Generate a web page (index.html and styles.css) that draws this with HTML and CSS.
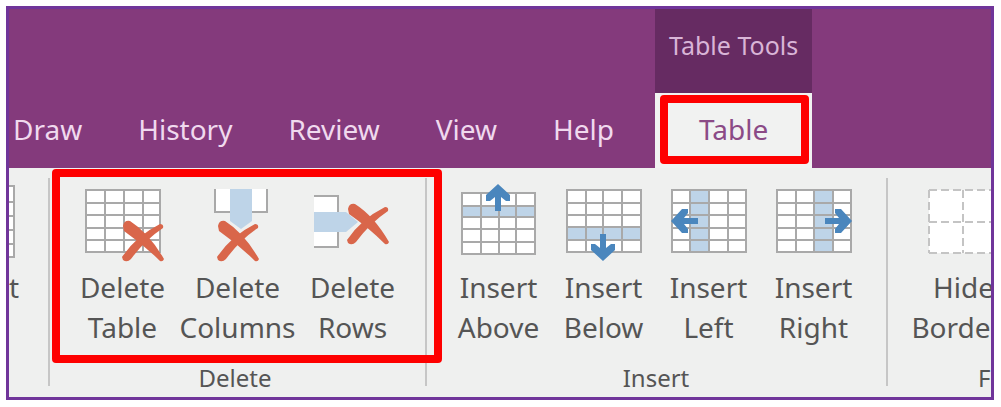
FILE: index.html
```html
<!DOCTYPE html>
<html lang="en">
<head>
<meta charset="utf-8">
<title>Table Tools ribbon</title>
<link rel="stylesheet" href="styles.css">
</head>
<body>
<svg class="defs" aria-hidden="true">
  <symbol id="cross" viewBox="0 0 42 43" overflow="visible">
    <path d="M1 6Q2 0 8 1Q27 13 42 39Q41 42 38 41Q22 25 2 11Z"/>
    <path d="M0 37Q14 16 38 4Q42 4 41 8Q23 20 9 39Q5 43 1 40Z"/>
  </symbol>
  <symbol id="arrow" viewBox="0 0 24 28" overflow="visible">
    <path d="M12 0L24 11V17H20L15 13V27H9V13L4 17H0V11Z"/>
  </symbol>
</svg>
<main class="frame">
  <header class="header">
    <nav class="tabs" role="tablist">
      <button class="tab" role="tab">Draw</button>
      <button class="tab" role="tab">History</button>
      <button class="tab" role="tab">Review</button>
      <button class="tab" role="tab">View</button>
      <button class="tab" role="tab">Help</button>
    </nav>
    <div class="context">
      <div class="context-title">Table Tools</div>
      <button class="tab tab-active" role="tab" aria-selected="true">Table<span class="mark mark-tab"></span></button>
    </div>
  </header>
  <div class="ribbon">
    <section class="group group-cut">
      <button class="tool">
        <svg class="icon-cut" viewBox="0 0 40 85"><path class="cell" d="M0 4H5V75H0z"/><path class="grid" d="M0 4H5V75H0M0 20H5M0 34H5M0 48H5M0 62H5"/></svg>
        <span>t</span>
      </button>
    </section>
    <span class="divider"></span>
    <section class="group group-delete">
      <div class="tools">
        <button class="tool">
          <svg class="icon" viewBox="0 0 88 85"><path class="cell" d="M7 8H81V70H7z"/><path class="grid" d="M7 8H81V70H7zM26 8V70M45 8V70M64 8V70M7 21H81M7 33H81M7 46H81M7 58H81"/><use class="cross" href="#cross" x="43" y="38" width="42" height="43"/></svg>
          <span>Delete<br>Table</span>
        </button>
        <button class="tool">
          <svg class="icon" viewBox="0 0 88 85"><path class="cell" d="M21 7H36V30H21zM58 7H73V30H58z"/><path class="grid" d="M21 7V30H36M58 30H73V7"/><path class="band" d="M36 7H58V39L47 47L36 39z"/><use class="cross" href="#cross" x="23" y="38" width="42" height="43"/></svg>
          <span>Delete<br>Columns</span>
        </button>
        <button class="tool">
          <svg class="icon" viewBox="0 0 88 85"><path class="cell" d="M5 14H29V30H5zM5 50H29V65H5z"/><path class="grid" d="M5 14H29V30M29 50V65H5"/><path class="band" d="M5 30H37L49 40L37 50H5z"/><use class="cross" href="#cross" x="38" y="21" width="42" height="43"/></svg>
          <span>Delete<br>Rows</span>
        </button>
      </div>
      <h2 class="group-label">Delete</h2>
      <span class="mark mark-group"></span>
    </section>
    <span class="divider"></span>
    <section class="group group-insert">
      <div class="tools">
        <button class="tool">
          <svg class="icon" viewBox="0 0 88 85"><path class="cell" d="M7 11H80V72H7z"/><path class="band" d="M7 24H80V35H7z"/><path class="grid" d="M7 11H80V72H7zM26 11V72M44 11V72M61 11V72M7 24H80M7 35H80M7 47H80M7 60H80"/><use class="arrow" href="#arrow" x="31" y="2" width="24" height="28"/></svg>
          <span>Insert<br>Above</span>
        </button>
        <button class="tool">
          <svg class="icon" viewBox="0 0 88 85"><path class="cell" d="M7 8H81V70H7z"/><path class="band" d="M7 45H81V58H7z"/><path class="grid" d="M7 8H81V70H7zM26 8V70M43 8V70M62 8V70M7 21H81M7 33H81M7 45H81M7 58H81"/><g transform="rotate(180 43 66)"><use class="arrow" href="#arrow" x="31" y="53" width="24" height="28"/></g></svg>
          <span>Insert<br>Below</span>
        </button>
        <button class="tool">
          <svg class="icon" viewBox="0 0 88 85"><path class="cell" d="M7 8H81V70H7z"/><path class="band" d="M25 8H44V70H25z"/><path class="grid" d="M7 8H81V70H7zM25 8V70M44 8V70M63 8V70M7 21H81M7 33H81M7 46H81M7 58H81"/><g transform="rotate(-90 19 39)"><use class="arrow" href="#arrow" x="7" y="26" width="24" height="28"/></g></svg>
          <span>Insert<br>Left</span>
        </button>
        <button class="tool">
          <svg class="icon" viewBox="0 0 88 85"><path class="cell" d="M7 8H81V70H7z"/><path class="band" d="M44 8H63V70H44z"/><path class="grid" d="M7 8H81V70H7zM26 8V70M44 8V70M63 8V70M7 21H81M7 33H81M7 46H81M7 58H81"/><g transform="rotate(90 69 39)"><use class="arrow" href="#arrow" x="57" y="26" width="24" height="28"/></g></svg>
          <span>Insert<br>Right</span>
        </button>
      </div>
      <h2 class="group-label">Insert</h2>
    </section>
    <span class="divider"></span>
    <section class="group group-format">
      <div class="tools">
        <button class="tool">
          <svg class="icon" viewBox="0 0 88 85"><path class="cell" d="M9 8H79V71H9z"/><path class="grid dashed" d="M9 8H79M9 40H79M9 71H79M9 8V71M43 8V71M79 8V71"/></svg>
          <span>Hide<br>Borders</span>
        </button>
      </div>
      <h2 class="group-label">Format</h2>
    </section>
  </div>
</main>
</body>
</html>
```
FILE: styles.css
```css
* {
  box-sizing: border-box;
}

body {
  margin: 6px 7px 7px 6px;
  background: #fff;
  font-family: "Noto Sans", "Open Sans", sans-serif;
  font-size: 28px;
  color: #555;
}

button {
  margin: 0;
  padding: 0;
  border: 0;
  background: none;
  font: inherit;
  color: inherit;
}

.defs {
  position: absolute;
  width: 0;
  height: 0;
}

.frame {
  border: 3px solid #70359a;
  overflow: hidden;
}

.header {
  display: flex;
  align-items: flex-end;
  background: #843a7c;
}

.tabs {
  display: flex;
  margin-left: -24px;
  margin-right: 13px;
}

.tab {
  padding: 17px 28px 19px;
  line-height: 39px;
  color: #f0d9ee;
}

.context {
  display: flex;
  flex-direction: column;
}

.context-title {
  padding: 16px 14px 28px;
  background: #662b62;
  font-size: 25px;
  line-height: 40px;
  text-align: center;
  color: #d9b5d7;
}

.tab-active {
  position: relative;
  background: #f1f2f1;
  color: #8b4a86;
}

.mark {
  position: absolute;
  border: 8px solid #fe0000;
  border-radius: 4px;
  pointer-events: none;
}

.mark-tab {
  inset: 2px 3px 4px 5px;
}

.mark-group {
  inset: 1px -17px 34px 2px;
  z-index: 1;
}

.ribbon {
  display: flex;
  background: #eff0ef;
}

.group {
  position: relative;
  flex: none;
  padding: 14px 15px 3px;
}

.group-cut {
  width: 39px;
  padding: 14px 0 3px;
}

.group-insert {
  padding: 14px 20px 3px 19px;
}

.group-format {
  padding: 14px 18px 3px;
}

.divider {
  flex: none;
  width: 2px;
  margin: 10px 0 11px;
  background: #c6c6c6;
}

.tools {
  display: flex;
}

.tool {
  display: flex;
  flex-direction: column;
  align-items: center;
  width: 115px;
  line-height: 40px;
  text-align: center;
}

.group-cut .tool {
  align-items: flex-start;
  width: 39px;
}

.group-insert .tool {
  width: 105px;
}

.icon {
  width: 88px;
  height: 85px;
}

.icon-cut {
  width: 40px;
  height: 85px;
}

.group-label {
  margin: 15px 0 0;
  font-size: 24px;
  font-weight: 400;
  line-height: 32px;
  text-align: center;
}

.group-delete .group-label {
  padding-right: 5px;
}

.group-format .group-label {
  padding-left: 72px;
}

.cell {
  fill: #fff;
}

.band {
  fill: #bed4e8;
}

.grid {
  fill: none;
  stroke: #a9a9a9;
  stroke-width: 2;
}

.dashed {
  stroke: #c4c4c4;
  stroke-dasharray: 8 4;
}

.cross {
  fill: #d9664a;
}

.arrow {
  fill: #4a86bd;
}
```
